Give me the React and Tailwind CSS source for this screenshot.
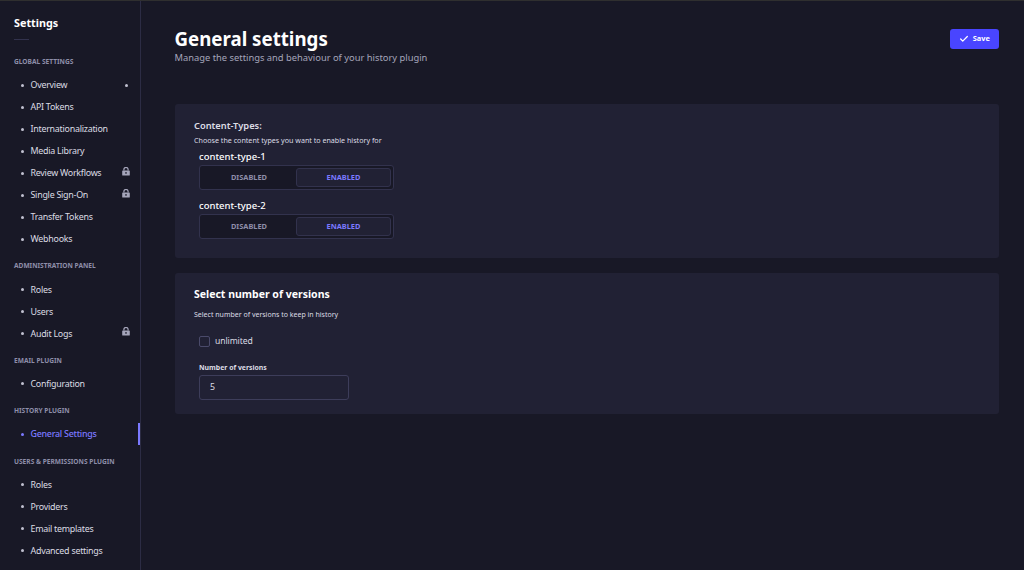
import { Check } from "lucide-react";

const sections = [
  {
    title: "Global Settings",
    items: [
      { name: "Overview", dot: true },
      { name: "API Tokens" },
      { name: "Internationalization" },
      { name: "Media Library" },
      { name: "Review Workflows", lock: true },
      { name: "Single Sign-On", lock: true },
      { name: "Transfer Tokens" },
      { name: "Webhooks" },
    ],
  },
  {
    title: "Administration Panel",
    items: [{ name: "Roles" }, { name: "Users" }, { name: "Audit Logs", lock: true }],
  },
  { title: "Email Plugin", items: [{ name: "Configuration" }] },
  { title: "History Plugin", items: [{ name: "General Settings", active: true }] },
  {
    title: "Users & Permissions Plugin",
    items: [{ name: "Roles" }, { name: "Providers" }, { name: "Email templates" }, { name: "Advanced settings" }],
  },
];

const LockIcon = () => (
  <svg width="8" height="9" viewBox="0 0 8 9" className="text-[#a5a5ba] mb-[3px]">
    <path d="M1.9 3.6V2.5a2.1 2.1 0 0 1 4.2 0v1.1" fill="none" stroke="currentColor" strokeWidth="1.2" />
    <path d="M.8 3.4h6.4a.6.6 0 0 1 .6.6v4a.6.6 0 0 1-.6.6H.8a.6.6 0 0 1-.6-.6V4a.6.6 0 0 1 .6-.6z" fill="currentColor" />
    <rect x="3.3" y="5" width="1.4" height="1.8" rx=".5" fill="#181826" />
  </svg>
);

const NavItem = ({ item }) => (
  <div
    className={`flex items-center h-[22px] pl-[21px] pr-[8px] border-r-2 ${
      item.active ? "border-[#7b79ff] text-[#7b79ff] font-medium" : "border-transparent text-[#dcdce4]"
    }`}
  >
    <span className={`w-[3px] h-[3px] rounded-full mr-[6.5px] ${item.active ? "bg-[#7b79ff]" : "bg-[#c0c0cf]"}`} />
    <span className="text-[8.9px] tracking-[-0.25px] flex-1">{item.name}</span>
    {item.dot && <span className="w-[3px] h-[3px] rounded-full bg-[#c0c0cf] mr-[2px]" />}
    {item.lock && <LockIcon />}
  </div>
);

const Toggle = () => (
  <div className="flex w-[195px] h-[25px] p-[2px] rounded-[3px] border border-[#32324d] bg-[#181826] text-[7.4px] font-bold">
    <div className="flex-1 flex items-center justify-center text-[#8e8ea9]">DISABLED</div>
    <div className="w-[95px] flex items-center justify-center rounded-[3px] border border-[#32324d] bg-[#212134] text-[#7b79ff]">
      ENABLED
    </div>
  </div>
);

export default function App() {
  return (
    <div className="flex w-[1024px] h-[570px] overflow-hidden bg-[#181826] font-['Noto_Sans',sans-serif] border-t border-[#2f2f2f]">
      <aside className="w-[141px] shrink-0 border-r border-[#2c2c44]">
        <div className="pl-[14px] pt-[14px]">
          <h2 className="text-[10.8px] leading-[16px] font-bold text-white">Settings</h2>
          <div className="w-[15px] h-px bg-[#32324d] mt-[8px] mb-[16px]" />
        </div>
        {sections.map((s) => (
          <div key={s.title} className="mb-[10.4px]">
            <div className="pl-[14px] h-[12px] mb-[6px] flex items-center text-[6.6px] font-bold uppercase text-[#8e8ea9]">
              {s.title}
            </div>
            {s.items.map((item) => (
              <NavItem key={item.name} item={item} />
            ))}
          </div>
        ))}
      </aside>

      <main className="flex-1 pl-[33.5px] pr-[25px]">
        <header className="flex justify-between items-start pt-[26px] h-[103px]">
          <div>
            <h1 className="text-[18.7px] leading-[24px] font-bold text-white">General settings</h1>
            <p className="text-[9.35px] leading-[14px] text-[#a5a5ba]">
              Manage the settings and behaviour of your history plugin
            </p>
          </div>
          <button className="flex items-center gap-[4px] w-[49.5px] h-[19.5px] mt-[2px] justify-center rounded-[3px] bg-[#4945ff] text-white text-[7.4px] font-bold">
            <Check size={10} strokeWidth={3} />
            Save
          </button>
        </header>

        <section className="h-[154px] rounded-[3px] bg-[#212134] pt-[15px] pl-[19.5px]">
          <h3 className="text-[9.3px] leading-[13px] font-semibold text-[#dcdce4]">Content-Types:</h3>
          <p className="text-[7.13px] leading-[10px] mt-[3px] text-[#dcdce4]">
            Choose the content types you want to enable history for
          </p>
          <div className="pl-[5px] mt-[6px]">
            <div className="text-[9.5px] leading-[12px] font-medium text-white mb-[2px]">content-type-1</div>
            <Toggle />
            <div className="text-[9.5px] leading-[12px] font-medium text-white mt-[10px] mb-[2px]">content-type-2</div>
            <Toggle />
          </div>
        </section>

        <section className="h-[141px] mt-[15px] rounded-[3px] bg-[#212134] pt-[14px] pl-[19.5px]">
          <h3 className="text-[10.5px] leading-[14px] font-bold text-white">Select number of versions</h3>
          <p className="text-[7px] leading-[10px] mt-[9px] text-[#dcdce4]">
            Select number of versions to keep in history
          </p>
          <div className="pl-[5px]">
            <label className="flex items-center gap-[5px] mt-[15px]">
              <span className="w-[11px] h-[11px] rounded-[2px] border border-[#4a4a6a] bg-[#212134]" />
              <span className="text-[8.6px] tracking-[-0.1px] leading-[12px] text-[#dcdce4]">unlimited</span>
            </label>
            <div className="text-[6.9px] leading-[10px] font-bold text-[#dcdce4] mt-[16px] mb-[2px]">Number of versions</div>
            <div className="flex items-center w-[150px] h-[25px] pl-[10px] rounded-[3px] border border-[#3d3d5a] bg-[#212134] text-[8.8px] text-[#dcdce4]">
              5
            </div>
          </div>
        </section>
      </main>
    </div>
  );
}
